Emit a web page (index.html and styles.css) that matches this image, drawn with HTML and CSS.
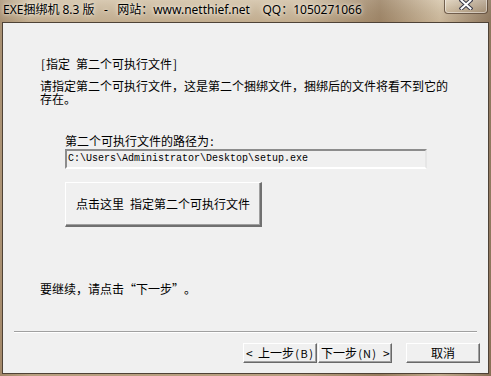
FILE: index.html
```html
<!DOCTYPE html>
<html lang="zh-CN">
<head>
<meta charset="utf-8">
<title>EXE捆绑机 8.3 版</title>
<link rel="stylesheet" href="styles.css">
</head>
<body>
<div class="window">
  <div class="titlebar">
    <div class="title">EXE捆绑机 8.3 版   -   网站：www.netthief.net    QQ：1050271066</div>
    <div class="close"><svg width="14" height="11" viewBox="0 0 14 11"><path d="M2.5 1.5 L11.5 9.5 M11.5 1.5 L2.5 9.5" stroke="#3a3a48" stroke-width="4" stroke-linecap="square"/><path d="M2.5 1.5 L11.5 9.5 M11.5 1.5 L2.5 9.5" stroke="#ffffff" stroke-width="2" stroke-linecap="square"/></svg></div>
  </div>
  <div class="client">
    <div class="page">
      <div class="heading"><span class="hw">[</span>指定<span class="hw"> </span>第二个可执行文件<span class="hw">]</span></div>
      <div class="desc">请指定第二个可执行文件，这是第二个捆绑文件，捆绑后的文件将看不到它的存在。</div>
      <div class="pick">
        <div class="label">第二个可执行文件的路径为<span class="hw">:</span></div>
        <div class="path">C:\Users\Administrator\Desktop\setup.exe</div>
        <div class="bigbtn">点击这里<span class="hw"> </span>指定第二个可执行文件</div>
      </div>
      <div class="hint">要继续，请点击<span class="fw open">“</span>下一步<span class="fw close-q">”</span>。</div>
    </div>
    <div class="sep"></div>
    <div class="buttons">
      <div class="btn"><span class="hw">&lt;</span><span class="hw"> </span>上一步<span class="hw sm">(</span><span class="hw wide sm">B</span><span class="hw sm">)</span></div>
      <div class="btn">下一步<span class="hw sm">(</span><span class="hw wide sm">N</span><span class="hw sm">)</span><span class="hw"> </span><span class="hw">&gt;</span></div>
      <div class="btn cancel">取消</div>
    </div>
  </div>
</div>
</body>
</html>
```
FILE: styles.css
```css
html, body {
  margin: 0;
  padding: 0;
}
body {
  width: 491px;
  height: 376px;
  overflow: hidden;
  font-family: "Noto Sans CJK SC", "Liberation Sans", sans-serif;
  font-size: 12px;
  color: #000;
}
.window {
  width: 491px;
  height: 376px;
  box-sizing: border-box;
  background:
    linear-gradient(90deg, rgba(120,90,60,0.35) 0px, rgba(255,245,225,0) 30px, rgba(255,245,225,0) 300px, rgba(110,80,50,0.45) 380px, rgba(230,215,190,0.2) 440px, rgba(90,65,45,0.5) 491px),
    linear-gradient(180deg, #d8c9b2 0px, #c9b79c 12px, #c2ad8f 22px, #c8b294 200px, #b99f80 376px);
  display: flex;
  flex-direction: column;
  padding: 0 2px 2px 2px;
}
.titlebar {
  height: 22px;
  display: flex;
  align-items: flex-start;
  flex-shrink: 0;
}
.title {
  padding: 1px 0 0 1px;
  line-height: 18px;
  font-family: "Noto Sans", "Noto Sans CJK SC", sans-serif;
  font-size: 12px;
  white-space: pre;
  text-shadow: 0 0 6px rgba(255,250,240,0.9), 0 0 3px rgba(255,250,240,0.8);
}
.close {
  margin-left: auto;
  margin-right: 1px;
  width: 44px;
  height: 15px;
  margin-top: -1px;
  box-sizing: border-box;
  border: 1px solid rgba(70,50,35,0.7);
  border-top: none;
  border-radius: 0 0 4px 4px;
  background: linear-gradient(180deg, rgba(255,250,240,0.35), rgba(200,180,150,0.25));
  box-shadow: inset 0 0 0 1px rgba(255,255,255,0.45);
  display: flex;
  justify-content: center;
}
.client {
  flex: 1;
  background: #f0f0f0;
  border: 1px solid #4e4236;
  display: flex;
  flex-direction: column;
}
.hw {
  display: inline-block;
  width: 6px;
  text-align: center;
  white-space: pre;
}
.hw.wide {
  width: 8px;
}
.hw.sm {
  font-size: 11px;
}
.fw {
  display: inline-block;
  width: 12px;
}
.fw.open {
  text-align: right;
}
.fw.close-q {
  text-align: left;
}
.page {
  padding: 34px 0 0 37px;
  height: 284px;
  box-sizing: border-box;
}
.heading {
  line-height: 13px;
}
.desc {
  margin-top: 9px;
  width: 412px;
  line-height: 13px;
}
.pick {
  margin-left: 25px;
  margin-top: 29px;
}
.label {
  line-height: 13px;
}
.path {
  margin-top: 2px;
  width: 362px;
  height: 20px;
  box-sizing: border-box;
  border-top: 2px solid #8c8c8c;
  border-left: 2px solid #8c8c8c;
  border-right: 2px solid #e6e6e6;
  border-bottom: 2px solid #ffffff;
  font-family: "Liberation Mono", monospace;
  font-size: 10px;
  line-height: 16px;
  padding-left: 1px;
  white-space: pre;
}
.bigbtn {
  margin-top: 13px;
  width: 197px;
  height: 45px;
  box-sizing: border-box;
  border-top: 1px solid #ffffff;
  border-left: 1px solid #ffffff;
  border-right: 2px solid #707070;
  border-bottom: 2px solid #707070;
  box-shadow: inset -1px -1px 0 #a0a0a0;
  display: flex;
  align-items: center;
  padding-left: 10px;
  padding-bottom: 1px;
}
.hint {
  margin-top: 55px;
  line-height: 13px;
}
.sep {
  margin: 24px 0 0 11px;
  width: 463px;
  height: 1px;
  background: #a0a0a0;
  border-bottom: 1px solid #ffffff;
}
.buttons {
  display: flex;
  margin-top: 10px;
  padding-left: 240px;
}
.btn {
  width: 74px;
  height: 20px;
  box-sizing: border-box;
  border-top: 1px solid #ffffff;
  border-left: 1px solid #ffffff;
  border-right: 1px solid #696969;
  border-bottom: 1px solid #696969;
  box-shadow: inset -1px -1px 0 #a0a0a0;
  display: flex;
  align-items: center;
  justify-content: center;
  line-height: 16px;
  white-space: pre;
  margin-right: 1px;
}
.btn.cancel {
  margin-left: 13px;
}
```
